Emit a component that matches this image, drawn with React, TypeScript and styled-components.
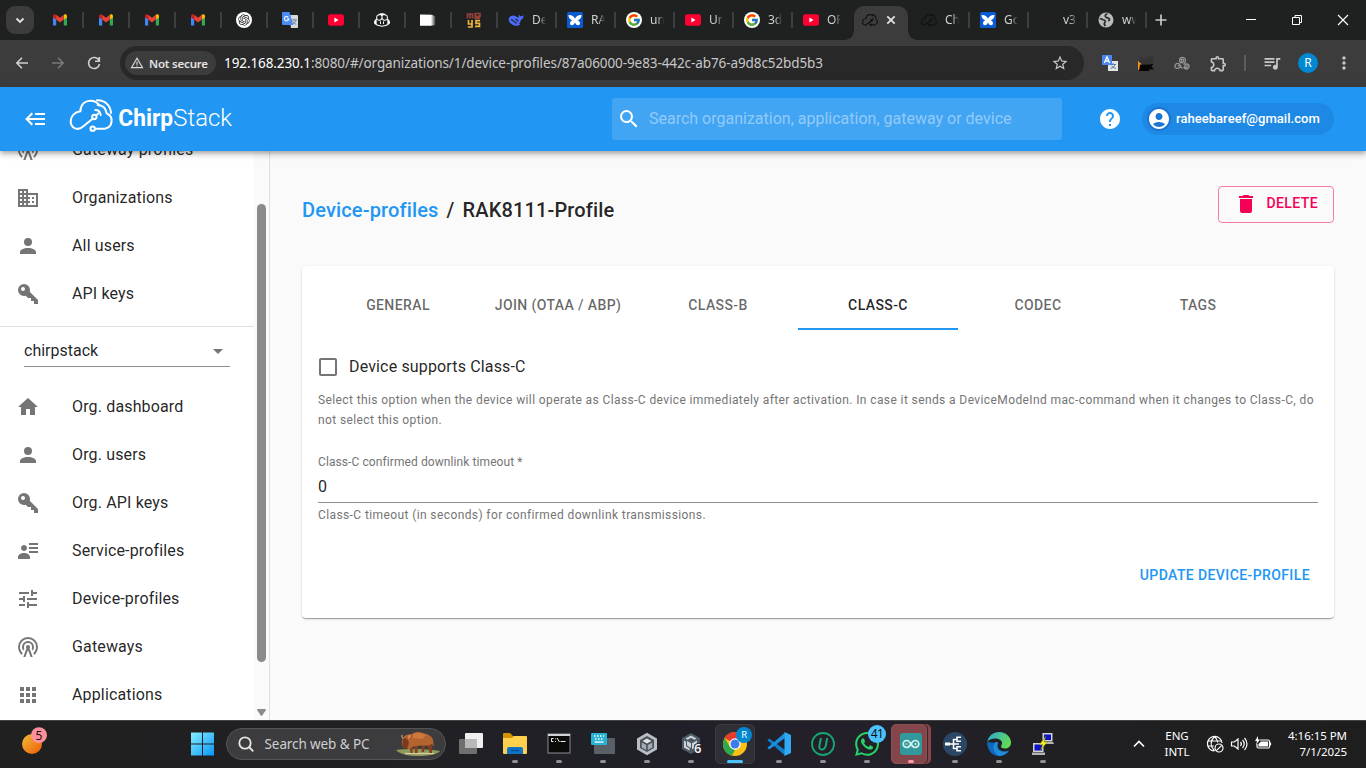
import React from "react";
import styled, { createGlobalStyle, css } from "styled-components";
import { FcGoogle } from "react-icons/fc";
import {
  MdHelp,
  MdAccountCircle,
  MdDelete,
  MdSearch,
  MdArrowDropDown,
  MdCheckBoxOutlineBlank,
  MdDomain,
  MdApps,
  MdStarBorder,
  MdMoreVert,
  MdOutlineExtension,
  MdQueueMusic,
} from "react-icons/md";
import { GoCopilot } from "react-icons/go";
import { SiOpenai, SiWhatsapp } from "react-icons/si";

const uiFont = `"Noto Sans", "Open Sans", sans-serif`;

const Global = createGlobalStyle`
  *, *::before, *::after { box-sizing: border-box; }
  html, body { margin: 0; padding: 0; overflow: hidden; }
  body { font-family: Roboto, sans-serif; color: rgba(0,0,0,.87); background: #fafafa; }
  svg { display: block; flex: none; }
`;

const Screen = styled.div`
  width: 1366px;
  height: 768px;
  display: flex;
  flex-direction: column;
  overflow: hidden;
`;

/* ---------- browser chrome ---------- */

const TabStrip = styled.div`
  height: 40px;
  flex: none;
  display: flex;
  align-items: stretch;
  background: #1f2120;
  font-family: ${uiFont};
`;

const TabSearch = styled.div`
  width: 28px;
  height: 28px;
  margin: 6px 3px 0 6px;
  border-radius: 9px;
  background: #3c3c3c;
  display: flex;
  align-items: center;
  justify-content: center;
`;

const Tab = styled.div<{ $wide?: boolean; $active?: boolean; $bar?: boolean }>`
  width: ${(p) => (p.$wide ? 59 : 46)}px;
  height: 40px;
  flex: none;
  padding-left: ${(p) => (p.$wide ? 11 : 15)}px;
  display: flex;
  align-items: center;
  position: relative;
  ${(p) =>
    p.$bar &&
    css`
      &::after {
        content: "";
        position: absolute;
        right: -1px;
        top: 12px;
        width: 2px;
        height: 16px;
        background: #3d3e3e;
      }
    `}
  ${(p) =>
    p.$active &&
    css`
      &::before {
        content: "";
        position: absolute;
        left: 3px;
        right: 2px;
        top: 6px;
        bottom: 0;
        border-radius: 10px 10px 0 0;
        background: #3c3c3c;
      }
      &::after {
        content: "";
        position: absolute;
        left: -6px;
        right: -7px;
        bottom: 0;
        height: 9px;
        background: radial-gradient(circle at 0 0, transparent 8.5px, #3c3c3c 9px) left / 9px 9px no-repeat,
          radial-gradient(circle at 100% 0, transparent 8.5px, #3c3c3c 9px) right / 9px 9px no-repeat;
      }
      > * {
        position: relative;
      }
    `}
`;

const Favicon = styled.span`
  width: 16px;
  height: 16px;
  flex: none;
  display: block;
`;

const TabTitle = styled.span`
  width: 14px;
  margin-left: 8px;
  overflow: hidden;
  white-space: nowrap;
  font-size: 12px;
  line-height: 18px;
  color: #d0d0d0;
  mask-image: linear-gradient(90deg, #000 50%, transparent);
`;

const CloseIcon = styled.svg`
  margin-left: 8px;
`;

const NewTab = styled.div`
  width: 30px;
  display: flex;
  align-items: center;
  justify-content: center;
`;

const WindowButtons = styled.div`
  margin-left: auto;
  display: flex;
  > div {
    width: 46px;
    display: flex;
    align-items: center;
    justify-content: center;
  }
`;

const AddressRow = styled.div`
  height: 47px;
  flex: none;
  display: flex;
  align-items: center;
  background: #3c3c3c;
  padding: 0 0 1px 4px;
  font-family: ${uiFont};
  color: #c7c7c7;
`;

const NavButton = styled.div`
  width: 36px;
  height: 34px;
  flex: none;
  display: flex;
  align-items: center;
  justify-content: center;
`;

const Omnibox = styled.div`
  width: 964px;
  height: 34px;
  margin: 0 8px;
  padding: 0 15px 0 5px;
  border-radius: 17px;
  background: #282828;
  display: flex;
  align-items: center;
`;

const SecurityChip = styled.div`
  width: 91px;
  height: 24px;
  border-radius: 12px;
  background: #3c3c3c;
  display: flex;
  align-items: center;
  gap: 5px;
  padding-left: 5px;
  font-size: 11.5px;
  font-weight: 600;
  letter-spacing: -0.2px;
  color: #e3e3e3;
  white-space: nowrap;
`;

const Url = styled.div`
  margin-left: 8px;
  flex: 1;
  font-size: 13.5px;
  letter-spacing: -0.09px;
  color: #c7c7c7;
  white-space: nowrap;
  b {
    font-weight: 400;
    color: #fff;
  }
`;

const BarDivider = styled.div`
  width: 2px;
  height: 16px;
  margin: 0 8px 0 8px;
  background: #5c5c5c;
`;

const Profile = styled.div`
  width: 20px;
  height: 20px;
  margin: 0 8px;
  border-radius: 50%;
  background: #0288d1;
  color: #fff;
  font-size: 12px;
  line-height: 20px;
  text-align: center;
`;

/* ---------- application ---------- */

const AppHeader = styled.header`
  height: 64px;
  flex: none;
  display: flex;
  align-items: center;
  padding: 0 32px 0 24px;
  background: #2196f3;
  color: #fff;
  position: relative;
  z-index: 2;
  box-shadow: 0 2px 4px -1px rgba(0, 0, 0, 0.2), 0 4px 5px rgba(0, 0, 0, 0.14),
    0 1px 10px rgba(0, 0, 0, 0.12);
`;

const LogoBox = styled.div`
  margin: 0 0 6px 16px;
`;

const SearchBox = styled.div`
  width: 450px;
  height: 42px;
  margin-left: auto;
  padding-left: 5px;
  display: flex;
  align-items: center;
  border-radius: 3px;
  background: rgba(255, 255, 255, 0.15);
  span {
    margin: 0 0 1px 8px;
    font-size: 16px;
    letter-spacing: 0;
    color: rgba(255, 255, 255, 0.43);
    white-space: nowrap;
  }
`;

const HelpButton = styled.div`
  margin: 0 20px 0 36px;
`;

const UserChip = styled.div`
  width: 192px;
  height: 32px;
  border-radius: 16px;
  background: #1e88e5;
  display: flex;
  align-items: center;
  padding-left: 5px;
  font-size: 13px;
  font-weight: 500;
  line-height: 20px;
  span {
    margin-bottom: 1px;
    letter-spacing: 0.04px;
  }
`;

const ChipAvatar = styled.div`
  width: 24px;
  height: 24px;
  margin-right: 5px;
  border-radius: 50%;
  background: #1976d2;
`;

const Body = styled.div`
  height: 569px;
  flex: none;
  display: flex;
  background: #fafafa;
`;

const Sidebar = styled.aside`
  width: 270px;
  flex: none;
  display: flex;
  border-right: 1px solid #e0e0e0;
  background: #fff;
  overflow: hidden;
`;

const SidebarScroll = styled.div`
  width: 254px;
  margin-top: -25px;
`;

const NavRow = styled.div`
  height: 48px;
  display: flex;
  align-items: center;
  padding-left: 16px;
  color: #757575;
  span {
    margin: 0 0 1px 32px;
    font-size: 16px;
    line-height: 24px;
    letter-spacing: 0.15px;
    color: rgba(0, 0, 0, 0.87);
  }
`;

const OrgBlock = styled.div`
  margin-top: 8px;
  height: 57px;
  padding: 8px 24px 0 24px;
  border-top: 1px solid #e0e0e0;
`;

const OrgSelect = styled.div`
  height: 32px;
  display: flex;
  align-items: center;
  justify-content: space-between;
  border-bottom: 1px solid #8f8f8f;
  font-size: 16px;
  letter-spacing: 0;
  svg {
    color: #757575;
  }
`;

const ScrollTrack = styled.div`
  width: 15px;
  padding: 53px 0 4px 3px;
  background: #fafafa;
  display: flex;
  flex-direction: column;
  justify-content: space-between;
`;

const ScrollThumb = styled.div`
  width: 9px;
  height: 458px;
  border-radius: 5px;
  background: #8b8b8b;
`;

const Main = styled.main`
  flex: 1;
  padding: 35px 32px 0 32px;
`;

const TitleRow = styled.div`
  height: 80px;
  display: flex;
  justify-content: space-between;
  align-items: flex-start;
`;

const Breadcrumb = styled.h1`
  margin: 8px 0 0;
  font-size: 20px;
  line-height: 32px;
  font-weight: 500;
  letter-spacing: 0.15px;
  display: flex;
  gap: 8px;
  a {
    color: #2196f3;
  }
`;

const DeleteButton = styled.button`
  width: 116px;
  height: 37px;
  padding: 0 15px 1px 15px;
  display: flex;
  align-items: center;
  justify-content: space-between;
  border: 1px solid rgba(245, 0, 87, 0.5);
  border-radius: 4px;
  background: transparent;
  color: #f50057;
  font: 500 14px/24px Roboto, sans-serif;
  letter-spacing: 0.4px;
  span {
    margin-bottom: 2px;
  }
`;

const Card = styled.section`
  height: 352px;
  padding: 16px;
  border-radius: 4px;
  background: #fff;
  box-shadow: 0 2px 1px -1px rgba(0, 0, 0, 0.2), 0 1px 1px rgba(0, 0, 0, 0.14),
    0 1px 3px rgba(0, 0, 0, 0.12);
`;

const Tabs = styled.div`
  display: flex;
`;

const CardTab = styled.div<{ $selected?: boolean }>`
  width: 160px;
  height: 48px;
  padding-top: 11px;
  text-align: center;
  font-size: 14px;
  line-height: 24px;
  font-weight: 500;
  letter-spacing: 0.4px;
  color: ${(p) => (p.$selected ? "rgba(0,0,0,.87)" : "rgba(0,0,0,.6)")};
  border-bottom: 2px solid ${(p) => (p.$selected ? "#2196f3" : "transparent")};
`;

const CheckRow = styled.div`
  margin-top: 24px;
  height: 26px;
  display: flex;
  align-items: center;
  margin-left: -2px;
  color: #757575;
  span {
    margin: 0 0 2px 9px;
    font-size: 16px;
    letter-spacing: 0.15px;
    color: rgba(0, 0, 0, 0.87);
  }
`;

const Help = styled.p<{ $top?: number }>`
  margin: ${(p) => p.$top ?? 0}px -4px 0 0;
  font-size: 12px;
  line-height: 20px;
  letter-spacing: 0.395px;
  color: #757575;
`;

const Field = styled.div`
  margin-top: 24px;
  border-bottom: 1px solid #8f8f8f;
  height: 49px;
  label {
    display: block;
    font-size: 12px;
    line-height: 16px;
    letter-spacing: 0.09px;
    color: #757575;
  }
  div {
    margin-top: 7px;
    font-size: 16px;
    line-height: 19px;
  }
`;

const Actions = styled.div`
  margin-top: 38px;
  padding-right: 8px;
  display: flex;
  justify-content: flex-end;
  font-size: 14px;
  line-height: 24px;
  font-weight: 500;
  letter-spacing: 0.4px;
  color: #2196f3;
`;

/* ---------- taskbar ---------- */

const Taskbar = styled.footer`
  height: 48px;
  flex: none;
  display: flex;
  align-items: center;
  background: linear-gradient(90deg, #202020, #202027 45%, #23202a 60%, #202022 80%, #1e1e1f);
  box-shadow: inset 0 1px 0 #444;
  color: #fff;
  font-family: ${uiFont};
`;

const Widgets = styled.div`
  width: 190px;
  padding-left: 22px;
`;

const SearchPill = styled.div`
  width: 220px;
  height: 32px;
  margin: 0 2px 0 12px;
  padding: 0 5px 0 11px;
  border-radius: 16px;
  border: 1px solid #555557;
  background: #3c3c3e;
  display: flex;
  align-items: center;
  justify-content: space-between;
  font-size: 13.5px;
  letter-spacing: -0.1px;
  color: #cfcfcf;
  span {
    margin-right: 16px;
    white-space: nowrap;
  }
`;

const TaskItems = styled.div`
  display: flex;
  margin-left: 1px;
`;

const TaskItem = styled.div<{ $mark?: string; $markWidth?: number }>`
  width: 44px;
  height: 48px;
  flex: none;
  position: relative;
  display: flex;
  align-items: center;
  justify-content: center;
  &::after {
    content: "";
    position: absolute;
    bottom: 5px;
    left: 50%;
    width: ${(p) => p.$markWidth ?? 6}px;
    height: 3px;
    margin-left: ${(p) => -(p.$markWidth ?? 6) / 2}px;
    border-radius: 2px;
    background: ${(p) => p.$mark ?? "#909090"};
  }
`;

const TaskTile = styled.div<{ $tone: "plain" | "alert" }>`
  width: 40px;
  height: 40px;
  display: flex;
  align-items: center;
  justify-content: center;
  border-radius: 5px;
  border: 1px solid #3a3a42;
  background: #2f2f36;
  ${(p) =>
    p.$tone === "alert" &&
    css`
      width: 36px;
      margin-right: 4px;
      padding-left: 4px;
      border-color: #8f5055;
      background: #85464b;
      box-shadow: 1px 0 0 #3a2529, 4px 0 0 #85464b;
    `}
`;

const Badge = styled.span<{ $size: number; $bg: string; $fg: string }>`
  position: absolute;
  top: ${(p) => (p.$size > 16 ? 5 : 7)}px;
  right: ${(p) => (p.$size > 16 ? 3 : 5)}px;
  width: ${(p) => p.$size}px;
  height: ${(p) => p.$size}px;
  border-radius: 50%;
  background: ${(p) => p.$bg};
  color: ${(p) => p.$fg};
  font-size: ${(p) => (p.$size > 16 ? 12 : 9.5)}px;
  line-height: ${(p) => p.$size}px;
  letter-spacing: -0.5px;
  text-align: center;
`;

const Tray = styled.div`
  margin-left: auto;
  padding-right: 19px;
  display: flex;
  align-items: center;
  font-size: 11.5px;
  line-height: 16px;
`;

const TrayText = styled.div<{ $w: number; $align?: string }>`
  width: ${(p) => p.$w}px;
  margin-bottom: 1px;
  text-align: ${(p) => p.$align ?? "center"};
  white-space: nowrap;
  letter-spacing: -0.05px;
`;

const TrayIcons = styled.div`
  display: flex;
  align-items: center;
  gap: 6px;
  margin: 0 11px 0 12px;
`;

const TrayChevron = styled.div`
  margin-right: 13px;
`;

/* ---------- drawings ---------- */

const Gmail = () => (
  <svg width="16" height="16" viewBox="-1 0 16 16">
    <path d="M0 4v9.5h3.2V7z" fill="#4285f4" />
    <path d="M14 4v9.5h-3.2V7z" fill="#34a853" />
    <path d="M0 4.2C0 2.300 2 1.800 3.200 2.800v4.800L0 5.400z" fill="#c5221f" />
    <path d="M14 4.2c0-1.900-2-2.400-3.200-1.400v4.800L14 5.400z" fill="#fbbc04" />
    <path d="M3.200 2.800L7 5.800l3.800-3v4.800L7 10.500 3.200 7.600z" fill="#ea4335" />
  </svg>
);

const YouTube = () => (
  <svg width="16" height="16" viewBox="0 0 16 16">
    <rect y="2.3" width="16" height="11.4" rx="2.6" fill="#ff0033" />
    <path d="M6.4 5.6v4.8L10.5 8z" fill="#fff" />
  </svg>
);

const ChatGpt = () => (
  <svg width="16" height="16" viewBox="0 0 16 16">
    <circle cx="8" cy="8" r="8" fill="#fff" />
    <g transform="translate(2.2 2.2)" color="#222">
      <SiOpenai size={11.6} />
    </g>
  </svg>
);

const TranslateIcon = () => (
  <svg width="16" height="16" viewBox="0 0 16 16">
    <path d="M7 3h8a1 1 0 0 1 1 1v11a1 1 0 0 1-1 1H9z" fill="#d6d9dd" />
    <path d="M9.5 8h5.5M12.2 6.8V8M14 8c-.5 2-2 3.500-3.500 4.300M10.800 9.300c.8 1.500 2 2.400 3.500 3" stroke="#6c8791" fill="none" />
    <path d="M1 0h6.500l3.800 13H1a1 1 0 0 1-1-1V1a1 1 0 0 1 1-1z" fill="#4c8bf5" />
    <path d="M6.300 5.300A2.200 2.200 0 1 0 6.800 7H4.800" stroke="#fff" fill="none" strokeWidth="1.100" />
  </svg>
);

const BlurSquare = () => (
  <svg width="16" height="16" viewBox="0 0 16 16">
    <defs>
      <linearGradient id="fadeSq">
        <stop offset=".7" stopColor="#fff" />
        <stop offset="1" stopColor="#fff" stopOpacity=".1" />
      </linearGradient>
    </defs>
    <path d="M0 2.500l12 .3 3.500 1.700v8.500l-4.500.8H0z" fill="url(#fadeSq)" />
  </svg>
);

const Meoys = () => (
  <svg width="16" height="16" viewBox="0 0 16 16" fill="none" strokeWidth="1.700">
    <path d="M1.500 6.500V2h5v4.500M4 2v4.500M9 4.300h5V1.500H9.200v4.700H14" stroke="#93403a" />
    <path d="M2.500 8v4h3.500V8M6 12v3H1.800M14 8.700h-4v2.600h3.500v3H9" stroke="#f0b43c" />
  </svg>
);

const Whale = () => (
  <svg width="16" height="16" viewBox="0 0 16 16">
    <path
      d="M.8 6.500C2 3.500 5 2.800 7.200 4c1.500.8 2.500 1.700 3.200 1.500.8-.3.200-1.800.5-3.200.6.900 1 1.700 1.900 1.900 1 .3 1.800-.5 2.800-1-.1 2.400-.9 4-2.700 4.600-.3 2-1 3.200-2 4.200 0 0 1 .6 1.500.800-3 1.700-6.800 1.300-9-.700C1.200 10.200.3 8.300.8 6.500z"
      fill="#4d6bfe"
    />
    <path d="M3 7.500c2 .3 3.500 2.500 5.500 4M7.200 7.300c1.400-.2 2.500 1 2.500 2.500" stroke="#1f2120" strokeWidth="1.100" fill="none" />
  </svg>
);

const Rak = () => (
  <svg width="16" height="16" viewBox="0 0 16 16">
    <rect width="16" height="16" rx="1.500" fill="#0a5bd3" />
    <path d="M1.500 3c2.800-.4 5.600 1.200 6.500 3.700C8.900 4.200 11.700 2.600 14.500 3c0 2.800-1.600 5-4.300 5.300 1.600.2 2.800 1.500 2.800 3 0 1.200-.8 2-1.900 2C9.300 13.300 8.400 11.800 8 10.300c-.4 1.500-1.300 3-3.100 3-1.100 0-1.900-.8-1.900-2 0-1.500 1.200-2.800 2.800-3C3.100 8 1.500 5.800 1.500 3z" fill="#fff" />
  </svg>
);

const GlobeFav = () => (
  <svg width="16" height="16" viewBox="0 0 16 16">
    <circle cx="8" cy="8" r="7.500" fill="#b9bbbd" />
    <path
      d="M9.500 1.800C7 2.500 6.500 4 8 5.200c1.200.9 3 .3 3.500 1.800.3 1-.5 1.600-1.500 1.600M1.800 6.500c1.700.2 2.700 1.500 4.200 1.500 1.300.2 1.800 1.500.8 2.500-.9 1-.3 2.500.7 3.500"
      stroke="#2a2c2b"
      strokeWidth="1.700"
      fill="none"
    />
  </svg>
);

const cloudPath =
  "M86 74 L58 97 C42 112 20 103 20 82 C20 66 32 54 49 52 C50 30 64 20 80 20 C92 20 100 25 106 33";

const CloudFav = ({ color = "#111" }: { color?: string }) => (
  <svg width="16" height="16" viewBox="15 0 132 128" fill="none" stroke={color} strokeWidth="9">
    <path d={cloudPath} />
    <path d="M92 104H120C148 100 148 66 128 58M96 20C118 20 128 34 132 52M92 70L112 48" />
    <circle cx="92" cy="69" r="6" />
    <circle cx="86" cy="104" r="6" />
  </svg>
);

const Logo = () => (
  <svg width="176" height="44" viewBox="0 0 528 132">
    <g fill="none" stroke="#fff" strokeWidth="6" strokeLinecap="round">
      <path d={cloudPath} />
      <path d="M94 104H122C148 100 148 68 131 60" />
      <path d="M99 19C122 18 140 34 141 57" />
      <path d="M101 33C116 34 126 44 128 58" />
      <path d="M94 48C103 48 109 54 110 63" />
      <path d="M97 64L103 58" />
      <circle cx="91" cy="69" r="6.500" />
      <circle cx="86" cy="104" r="6.500" />
    </g>
    <text x="163" y="96" fill="#fff" fontFamily="Roboto, sans-serif" fontSize="73" fontWeight="700" textLength="164" lengthAdjust="spacingAndGlyphs">
      Chirp
    </text>
    <text x="328" y="96" fill="#fff" fontFamily="Roboto, sans-serif" fontSize="73" fontWeight="300" textLength="176" lengthAdjust="spacingAndGlyphs">
      Stack
    </text>
  </svg>
);

const paths = {
  burger: "M5,13L9,17L7.6,18.42L1.18,12L7.6,5.58L9,7L5,11H21V13H5M21,6V8H11V6H21M21,16V18H11V16H21Z",
  tower:
    "M12,10A2,2 0 0,1 14,12C14,12.5 13.82,12.94 13.53,13.29L16.7,22H14.57L12,14.93L9.43,22H7.3L10.47,13.29C10.18,12.94 10,12.5 10,12A2,2 0 0,1 12,10M12,8A4,4 0 0,0 8,12C8,12.5 8.1,13 8.28,13.46L7.4,15.86C6.53,14.81 6,13.47 6,12A6,6 0 0,1 12,6A6,6 0 0,1 18,12C18,13.47 17.47,14.81 16.6,15.86L15.72,13.46C15.9,13 16,12.5 16,12A4,4 0 0,0 12,8M12,4A8,8 0 0,0 4,12C4,14.36 5,16.5 6.64,17.94L5.92,19.94C3.54,18.11 2,15.23 2,12A10,10 0 0,1 12,2A10,10 0 0,1 22,12C22,15.23 20.46,18.11 18.08,19.94L17.36,17.94C19,16.5 20,14.36 20,12A8,8 0 0,0 12,4Z",
  account: "M12,4A4,4 0 0,1 16,8A4,4 0 0,1 12,12A4,4 0 0,1 8,8A4,4 0 0,1 12,4M12,14C16.42,14 20,15.79 20,18V20H4V18C4,15.79 7.58,14 12,14Z",
  key: "M22,18V22H18V19H15V16H12L9.74,13.74C9.19,13.91 8.61,14 8,14A6,6 0 0,1 2,8A6,6 0 0,1 8,2A6,6 0 0,1 14,8C14,8.61 13.91,9.19 13.74,9.74L22,18M7,5A2,2 0 0,0 5,7A2,2 0 0,0 7,9A2,2 0 0,0 9,7A2,2 0 0,0 7,5Z",
  home: "M10,20V14H14V20H19V12H22L12,3L2,12H5V20H10Z",
  details:
    "M11 9C11 10.66 9.66 12 8 12C6.34 12 5 10.66 5 9C5 7.34 6.34 6 8 6C9.66 6 11 7.34 11 9M14 20H2V18C2 15.79 4.69 14 8 14C11.31 14 14 15.79 14 18M22 12V14H13V12M22 8V10H13V8M22 4V6H13V4Z",
  tune: "M3,17V19H9V17H3M3,5V7H13V5H3M13,21V19H21V17H13V15H11V21H13M7,9V11H3V13H7V15H9V9H7M21,13V11H11V13H21M15,9H17V7H21V5H17V3H15V9Z",
};

const Glyph = ({ d }: { d: string }) => (
  <svg width="24" height="24" viewBox="0 0 24 24" fill="currentColor">
    <path d={d} />
  </svg>
);

const Line = ({ d, size = 16, w = 1.6, color = "currentColor" }: { d: string; size?: number; w?: number; color?: string }) => (
  <svg width={size} height={size} viewBox="0 0 16 16" fill="none" stroke={color} strokeWidth={w}>
    <path d={d} />
  </svg>
);

const ExtTranslate = () => (
  <svg width="16" height="16" viewBox="0 0 16 16">
    <rect x="6" y="6" width="10" height="10" fill="#dfe5ea" />
    <path d="M8 9.500h6M11 8v1.500M13 9.500c-.6 2-2.500 3.500-4.500 4M9.500 11c1.500 1 2.500 2 4.500 2.500" stroke="#5c7f9b" fill="none" />
    <rect width="10" height="10" fill="#4a86ee" />
    <path d="M2.300 8L5 1.800 7.700 8M3.300 6h3.400" stroke="#fff" strokeWidth="1.300" fill="none" />
  </svg>
);

const ExtDark = () => (
  <svg width="16" height="16" viewBox="0 0 16 16">
    <path d="M2 2l5 2 7-3 2 4-3 4H1z" fill="#343434" />
    <path d="M0 6l4 3.500L2 15H0z" fill="#f7931e" />
    <path d="M2 9.500h10l3.500-1-2 3 2.500 3h-3l-1.500-1v2.500H1z" fill="#050505" />
  </svg>
);

const ExtTriskel = () => (
  <svg width="16" height="16" viewBox="0 0 16 16" fill="none" stroke="#949494" strokeWidth="1.300">
    <path d="M8.500 6.500a1.200 1.200 0 1 1 1-1.800c.8 1.800-.8 3.600-3 2.900a3 3 0 1 1 5-2.500c.2 2-.5 3.300-2 4.400" />
    <path d="M4 11.300a1.200 1.200 0 1 1 .9 1.400M4.900 12.700C2.500 14.500.5 12.500 1 10.500c.5-2 3-2.700 4.500-1.300 1.500 1.500 1 3.600 3 4.300" />
    <path d="M12.300 10.500a1.200 1.200 0 1 1-1.500 1M10.800 11.500c-.3-2.500 2-3.300 3.500-2 1.500 1.500.8 4.200-1.300 4.500-1.800.2-3-.8-3.500-2.200" />
  </svg>
);

const Bison = () => (
  <svg width="44" height="24" viewBox="0 0 44 24">
    <path d="M0 18c10-1.500 30-1.500 44 1-2 3.500-12 5-22 5S4 22 0 18z" fill="#8d9a5b" />
    <path d="M9 21.500h29" stroke="#d9cf9c" strokeWidth="1.300" />
    <path d="M31 9l5 4v8h-2.500l-.8-5-4.700-4zM18 12h4l-.5 9h-2.500zM25.500 11h4l-1.500 9h-2.300zM13.500 12h3.500l-.4 9h-2.200z" fill="#84401e" />
    <path d="M7 6C9 2 13 3 17 1.500c4-2.200 7-1.500 10-.5 5 1 9 3 10 7l.8 7-1.800-3c-3 2-8 1.300-11 1.500l-8 1-4 3-3-2.500-2.500.5C5.500 12.500 5 9 7 6z" fill="#b5642f" />
    <path d="M7 6c4 0 6 2 5.800 5 0 3-2 5.500-4 5.500S6 12 7 6z" fill="#7a3b1d" />
    <path d="M17 2c4-2 9-1 13 1l-4 4-9-1z" fill="#cc7a3c" />
    <path d="M7.500 6.500c-2-.8-2-2.600-1.200-3.700M12 6c2-1 2-2 1-3" stroke="#e8cda0" fill="none" />
  </svg>
);

const WindowsLogo = () => (
  <svg width="24" height="24" viewBox="0 0 24 24">
    <defs>
      <linearGradient id="win" x1="0" y1="0" x2="1" y2="1">
        <stop stopColor="#84f0ff" />
        <stop offset="1" stopColor="#0a94f8" />
      </linearGradient>
    </defs>
    <path d="M1 .500h11v11H1zM13 .500h11v11H13zM1 12.500h11v11H1zM13 12.500h11v11H13z" fill="url(#win)" />
  </svg>
);

const WeatherIcon = () => (
  <svg width="26" height="34" viewBox="0 0 26 34">
    <defs>
      <linearGradient id="sun" x1="0" y1="0" x2="1" y2="1">
        <stop stopColor="#efbf35" />
        <stop offset="1" stopColor="#ef5a0a" />
      </linearGradient>
    </defs>
    <circle cx="10" cy="17" r="10" fill="url(#sun)" />
    <circle cx="17" cy="8.200" r="8" fill="#ff8f9b" />
    <text x="17" y="12.500" textAnchor="middle" fontFamily="Noto Sans" fontSize="12" fill="#111">
      5
    </text>
  </svg>
);

const TaskView = () => (
  <svg width="24" height="24" viewBox="0 0 24 24">
    <rect x="6" y="1" width="18" height="15" rx="1" fill="#efefef" />
    <rect x="0" y="7" width="18" height="15" rx="1" fill="#6f6f70" />
    <rect x="6" y="7" width="12" height="9" fill="#b8b8b8" />
  </svg>
);

const Folder = () => (
  <svg width="24" height="24" viewBox="0 0 24 24">
    <path d="M0 2a1 1 0 0 1 1-1h6l3 3h12v5H0z" fill="#d39300" />
    <path d="M0 6h9l2-2h12a1 1 0 0 1 1 1v16a1 1 0 0 1-1 1H1a1 1 0 0 1-1-1z" fill="#ffd04c" />
    <path d="M4 22v-5a2 2 0 0 1 2-2h12a2 2 0 0 1 2 2v5z" fill="#1073c6" />
    <path d="M8 18.500h8" stroke="#075395" strokeWidth="1.500" />
  </svg>
);

const Cmd = () => (
  <svg width="24" height="24" viewBox="0 0 24 24">
    <rect x="1" y="2" width="22" height="19" fill="#0a0a0a" stroke="#8e8e8e" />
    <path d="M1 3h22" stroke="#cdd2d6" strokeWidth="2" />
    <path d="M6.500 6.500h-2v3h2M8.500 6.500v.8M8.500 9v.8M10 6l2.500 4M13.500 9.500h5" stroke="#eee" fill="none" />
  </svg>
);

const Keyboard = () => (
  <svg width="24" height="24" viewBox="0 0 24 24">
    <rect x="3" y="6" width="21" height="16" rx="1" fill="#596068" />
    <rect x="0" y="1" width="16" height="12" rx="1" fill="#27b3d2" />
    <path d="M3 4h10M4 7h9" stroke="#fff" strokeWidth="1.500" strokeDasharray="1.500 1.500" />
    <path d="M3.500 10h9" stroke="#fff" strokeWidth="1.300" />
  </svg>
);

const Unity = () => (
  <svg width="24" height="24" viewBox="0 0 24 24">
    <path d="M12 .8l10 5.600v11.200l-10 5.600-10-5.600V6.400z" fill="#b9bec5" />
    <path d="M12 4l7 4v8l-7 4-7-4V8z" fill="#4b525b" />
    <path d="M12 6.500l4.500 2.500-4.500 2.600L7.500 9z" fill="#dfe2e6" />
    <path d="M6.700 10.500l4.500 2.600v5l-4.500-2.600zM17.300 10.500l-4.500 2.600v5l4.500-2.600z" fill="#a4aab2" />
  </svg>
);

const UnitySix = () => (
  <svg width="24" height="24" viewBox="0 0 24 24">
    <path d="M12 1l9 5v11l-9 5-9-5V6z" fill="#4d5964" />
    <path d="M12 3.500l5.500 3-2 1.200L12 5.800 8.500 7.700l-2-1.200zM5 8.500l2 1.200v4.500l3.500 2v2.300L5 15.500zM18 8.500l-5 2.800v6l2-1.100v-3.500l3-1.700zM8 9l4 2.300V16L8 13.500z" fill="#cdd4da" />
    <text x="15" y="21" fontFamily="Noto Sans" fontWeight="600" fontSize="13" fill="#f1f1f1" stroke="#202027" strokeWidth="1.500" paintOrder="stroke">
      6
    </text>
  </svg>
);

const Chrome = () => (
  <svg width="24" height="24" viewBox="0 0 24 24">
    <circle cx="12" cy="12" r="12" fill="#fbc116" />
    <path d="M12 12L1.600 6a12 12 0 0 1 20.800 0z" fill="#e33b2e" />
    <path d="M1.600 6L7 15l5 3-3 5.600A12 12 0 0 1 1.600 6z" fill="#2da94f" />
    <circle cx="12" cy="12" r="5.700" fill="#fff" />
    <circle cx="12" cy="12" r="4.500" fill="#3b7ded" />
  </svg>
);

const VsCode = () => (
  <svg width="24" height="24" viewBox="0 0 24 24">
    <path d="M.4 8.200L2.300 6.500 18 18v5.500z" fill="#0f7fcc" />
    <path d="M.4 15.800l1.900 1.700L18 6V.5z" fill="#1a8fdd" />
    <path d="M17.500 0L24 3v18l-6.500 3z" fill="#32a9f3" />
  </svg>
);

const Uninstaller = () => (
  <svg width="24" height="24" viewBox="0 0 24 24" fill="none">
    <circle cx="12" cy="12" r="11" stroke="#17a673" strokeWidth="1.800" />
    <path d="M10 6L8.500 13c-.6 3 0 4.500 2.300 4.500 2.500 0 3.400-1.500 4-4L16.200 6" stroke="#17a673" strokeWidth="2" />
  </svg>
);

const Arduino = () => (
  <svg width="22" height="22" viewBox="0 0 22 22" fill="none">
    <rect width="22" height="22" rx="3" fill="#31999c" />
    <path d="M11 11C9.500 8.500 8.500 7.500 6.700 7.500a3.500 3.500 0 0 0 0 7c1.800 0 2.800-1 4.300-3.500s2.500-3.500 4.300-3.500a3.500 3.500 0 0 1 0 7c-1.800 0-2.800-1-4.300-3.500z" stroke="#d5f2f0" strokeWidth="1.700" />
    <path d="M5.500 11h2M14.500 11h2M15.500 10v2" stroke="#d5f2f0" />
  </svg>
);

const NodesApp = () => (
  <svg width="24" height="24" viewBox="0 0 24 24">
    <circle cx="12" cy="12" r="12" fill="#2b4766" />
    <path d="M6 12h10M10.500 7v10M10 7.500h3.500M10 16.500h3.500M14 4.500v5.500M14 14v5.500M14 5.200h4M14 9.300h4M14 14.700h4M14 18.800h4" stroke="#fff" strokeWidth="1.500" fill="none" />
    <path d="M2 10.500h5v3H2z" fill="#fff" />
  </svg>
);

const Edge = () => (
  <svg width="24" height="24" viewBox="0 0 24 24">
    <defs>
      <linearGradient id="edgeTop" x1="0" y1="0" x2="1" y2=".4">
        <stop stopColor="#2aa5dc" />
        <stop offset="1" stopColor="#62d857" />
      </linearGradient>
    </defs>
    <path d="M.2 10C0 18 5 24 12 24c4.500 0 8-2.500 10-5.500-3 1.500-6.500 1.500-9-.3-2.300-1.600-2.700-4.500-1.500-7z" fill="#1068bd" />
    <path d="M.2 10C1.500 3.500 6.500 0 12 0c7.500 0 12 5.500 12 10.500 0 4-3 6-6 6-2.500 0-4-1-4-2.300 0-.8 1-1.200 1-3C15 8 11.500 6.500 8.500 6.500 4.500 6.500 1.500 8 .2 10z" fill="url(#edgeTop)" />
    <path d="M8.500 10c-4 4-2 11 3.500 14 4.500 0 8-2.500 10-5.500-2.500 1.500-6 2-9 .3-3.500-2-4-5.500-2-8.800z" fill="#1f8cdb" />
  </svg>
);

const Putty = () => (
  <svg width="24" height="24" viewBox="0 0 24 24">
    <rect x="11.500" y="1" width="10" height="8.500" fill="#d2d2d2" />
    <rect x="13" y="2.500" width="7" height="5.500" fill="#0b12c8" />
    <path d="M10 10h12l1 2H11z" fill="#b5b5b5" />
    <rect x="2" y="11" width="10.500" height="9" fill="#d2d2d2" />
    <rect x="3.500" y="12.500" width="7.500" height="6" fill="#0b12c8" />
    <path d="M1 20.500h13V23H1z" fill="#b5b5b5" />
    <path d="M15 4L8 13l4-.5-3 6 8-9-4 .5z" fill="#f5ee26" stroke="#605d00" strokeWidth=".4" />
  </svg>
);

/* ---------- data ---------- */

function GoogleFav() {
  return (
    <svg width="16" height="16" viewBox="0 0 16 16">
      <circle cx="8" cy="8" r="8" fill="#fff" />
      <g transform="translate(1 1)">
        <FcGoogle size={14} />
      </g>
    </svg>
  );
}

const smallTabs = [
  <Gmail />,
  <Gmail />,
  <Gmail />,
  <Gmail />,
  <ChatGpt />,
  <TranslateIcon />,
  <YouTube />,
  <GoCopilot size={16} color="#fff" />,
  <BlurSquare />,
  <Meoys />,
];

const wideTabs: [React.ReactNode, string][] = [
  [<Whale />, "Dee"],
  [<Rak />, "RAK"],
  [<GoogleFav />, "unk"],
  [<YouTube />, "Un"],
  [<GoogleFav />, "3d p"],
  [<YouTube />, "OF"],
];

const lateTabs: [React.ReactNode, string][] = [
  [<CloudFav />, "Chi"],
  [<Rak />, "Go"],
  [<CloudFav color="#242323" />, "v3"],
  [<GlobeFav />, "ww"],
];

const topNav: [React.ReactNode, string][] = [
  [<Glyph d={paths.tower} />, "Gateway profiles"],
  [<MdDomain size={24} />, "Organizations"],
  [<Glyph d={paths.account} />, "All users"],
  [<Glyph d={paths.key} />, "API keys"],
];

const orgNav: [React.ReactNode, string][] = [
  [<Glyph d={paths.home} />, "Org. dashboard"],
  [<Glyph d={paths.account} />, "Org. users"],
  [<Glyph d={paths.key} />, "Org. API keys"],
  [<Glyph d={paths.details} />, "Service-profiles"],
  [<Glyph d={paths.tune} />, "Device-profiles"],
  [<Glyph d={paths.tower} />, "Gateways"],
  [<MdApps size={24} />, "Applications"],
];

const cardTabs = ["GENERAL", "JOIN (OTAA / ABP)", "CLASS-B", "CLASS-C", "CODEC", "TAGS"];

export default function App() {
  return (
    <Screen>
      <Global />
      <TabStrip>
        <TabSearch>
          <Line d="M4.500 6.500L8 10l3.500-3.500" color="#e3e3e3" w={1.8} />
        </TabSearch>
        {smallTabs.map((icon, i) => (
          <Tab key={i} $bar>
            <Favicon>{icon}</Favicon>
          </Tab>
        ))}
        {wideTabs.map(([icon, title], i) => (
          <Tab key={i} $wide $bar={i < wideTabs.length - 1}>
            <Favicon>{icon}</Favicon>
            <TabTitle>{title}</TabTitle>
          </Tab>
        ))}
        <Tab $wide $active>
          <Favicon>
            <CloudFav />
          </Favicon>
          <CloseIcon width="10" height="10" viewBox="0 0 10 10" stroke="#e3e3e3" strokeWidth="1.8">
            <path d="M1.300 1.300l7.400 7.400M8.700 1.300L1.300 8.700" />
          </CloseIcon>
        </Tab>
        {lateTabs.map(([icon, title], i) => (
          <Tab key={i} $wide $bar>
            <Favicon>{icon}</Favicon>
            <TabTitle>{title}</TabTitle>
          </Tab>
        ))}
        <NewTab>
          <Line d="M8 2.500v11M2.500 8h11" color="#c7c7c7" w={1.7} />
        </NewTab>
        <WindowButtons>
          <div>
            <Line d="M3 7.500h10" color="#fff" w={1} />
          </div>
          <div>
            <Line d="M3.500 5.500h7v7h-7zM6 5.500V3.500h6.500V10.500h-2" color="#fff" w={1} />
          </div>
          <div>
            <Line d="M3 3l10 10M13 3L3 13" color="#fff" w={1.1} />
          </div>
        </WindowButtons>
      </TabStrip>

      <AddressRow>
        <NavButton>
          <Line d="M14 8H3M8 2.800L2.800 8 8 13.200" color="#d0d0d0" />
        </NavButton>
        <NavButton>
          <Line d="M2 8h11M8 2.800L13.200 8 8 13.200" color="#7a7a7a" />
        </NavButton>
        <NavButton>
          <Line d="M13 5.500A5.500 5.500 0 1 0 13.500 9M13.300 2v4.300H9" color="#d0d0d0" />
        </NavButton>
        <Omnibox>
          <SecurityChip>
            <Line d="M8 2.500L1.800 13.200h12.400zM8 6.500v3.500M8 10.800v1.300" size={14} w={1.4} color="#d8d8d8" />
            Not secure
          </SecurityChip>
          <Url>
            <b>192.168.230.1</b>:8080/#/organizations/1/device-profiles/87a06000-9e83-442c-ab76-a9d8c52bd5b3
          </Url>
          <MdStarBorder size={18} />
        </Omnibox>
        <NavButton>
          <ExtTranslate />
        </NavButton>
        <NavButton>
          <ExtDark />
        </NavButton>
        <NavButton>
          <ExtTriskel />
        </NavButton>
        <NavButton>
          <MdOutlineExtension size={19} />
        </NavButton>
        <BarDivider />
        <NavButton>
          <MdQueueMusic size={20} />
        </NavButton>
        <Profile>R</Profile>
        <NavButton>
          <MdMoreVert size={20} />
        </NavButton>
      </AddressRow>

      <AppHeader>
        <Glyph d={paths.burger} />
        <LogoBox>
          <Logo />
        </LogoBox>
        <SearchBox>
          <MdSearch size={24} />
          <span>Search organization, application, gateway or device</span>
        </SearchBox>
        <HelpButton>
          <MdHelp size={24} />
        </HelpButton>
        <UserChip>
          <ChipAvatar>
            <MdAccountCircle size={24} />
          </ChipAvatar>
          <span>raheebareef@gmail.com</span>
        </UserChip>
      </AppHeader>

      <Body>
        <Sidebar>
          <SidebarScroll>
            {topNav.map(([icon, label]) => (
              <NavRow key={label}>
                {icon}
                <span>{label}</span>
              </NavRow>
            ))}
            <OrgBlock>
              <OrgSelect>
                chirpstack
                <MdArrowDropDown size={24} />
              </OrgSelect>
            </OrgBlock>
            {orgNav.map(([icon, label]) => (
              <NavRow key={label}>
                {icon}
                <span>{label}</span>
              </NavRow>
            ))}
          </SidebarScroll>
          <ScrollTrack>
            <ScrollThumb />
            <svg width="9" height="7" viewBox="0 0 9 7">
              <path d="M.8 0h7.400a.8.800 0 0 1 .6 1.200L5.200 6.500a.8.800 0 0 1-1.400 0L.2 1.200A.8.800 0 0 1 .8 0z" fill="#8b8b8b" />
            </svg>
          </ScrollTrack>
        </Sidebar>

        <Main>
          <TitleRow>
            <Breadcrumb>
              <a>Device-profiles</a>
              <span>/</span>
              <span>RAK8111-Profile</span>
            </Breadcrumb>
            <DeleteButton>
              <MdDelete size={24} />
              <span>DELETE</span>
            </DeleteButton>
          </TitleRow>
          <Card>
            <Tabs>
              {cardTabs.map((label) => (
                <CardTab key={label} $selected={label === "CLASS-C"}>
                  {label}
                </CardTab>
              ))}
            </Tabs>
            <CheckRow>
              <MdCheckBoxOutlineBlank size={24} />
              <span>Device supports Class-C</span>
            </CheckRow>
            <Help $top={10}>
              Select this option when the device will operate as Class-C device immediately after activation. In case it
              sends a DeviceModeInd mac-command when it changes to Class-C, do not select this option.
            </Help>
            <Field>
              <label>Class-C confirmed downlink timeout *</label>
              <div>0</div>
            </Field>
            <Help $top={2}>Class-C timeout (in seconds) for confirmed downlink transmissions.</Help>
            <Actions>UPDATE DEVICE-PROFILE</Actions>
          </Card>
        </Main>
      </Body>

      <Taskbar>
        <Widgets>
          <WeatherIcon />
        </Widgets>
        <WindowsLogo />
        <SearchPill>
          <svg width="16" height="16" viewBox="0 0 16 16" fill="none" stroke="#e6e6e6" strokeWidth="1.800">
            <circle cx="7" cy="7" r="5.700" />
            <path d="M11 11l4.300 4.300" />
          </svg>
          <span>Search web &amp; PC</span>
          <Bison />
        </SearchPill>
        <TaskItems>
          <TaskItem $mark="transparent">
            <TaskView />
          </TaskItem>
          <TaskItem>
            <Folder />
          </TaskItem>
          <TaskItem>
            <Cmd />
          </TaskItem>
          <TaskItem>
            <Keyboard />
          </TaskItem>
          <TaskItem>
            <Unity />
          </TaskItem>
          <TaskItem>
            <UnitySix />
          </TaskItem>
          <TaskItem $mark="#4cc2ff" $markWidth={16}>
            <TaskTile $tone="plain">
              <Chrome />
            </TaskTile>
            <Badge $size={16} $bg="#0288d1" $fg="#fff">
              R
            </Badge>
          </TaskItem>
          <TaskItem>
            <VsCode />
          </TaskItem>
          <TaskItem>
            <Uninstaller />
          </TaskItem>
          <TaskItem>
            <SiWhatsapp size={24} color="#25d366" />
            <Badge $size={18} $bg="#4cc2ff" $fg="#111">
              41
            </Badge>
          </TaskItem>
          <TaskItem $mark="#ff99a4">
            <TaskTile $tone="alert">
              <Arduino />
            </TaskTile>
          </TaskItem>
          <TaskItem>
            <NodesApp />
          </TaskItem>
          <TaskItem>
            <Edge />
          </TaskItem>
          <TaskItem>
            <Putty />
          </TaskItem>
        </TaskItems>
        <Tray>
          <TrayChevron>
            <Line d="M3 10.500l5-5 5 5" w={1.6} />
          </TrayChevron>
          <TrayText $w={34}>
            ENG
            <br />
            INTL
          </TrayText>
          <TrayIcons>
            <svg width="18" height="18" viewBox="0 0 18 18" fill="none" stroke="#fff" strokeWidth="1.200">
              <path d="M8.500 16A7.300 7.300 0 1 1 16 8M8.500 16C4 11 4 6 8.500 1.500c2 2 3 4 3.200 6M1.800 6h13.500M1.800 11h6" />
              <circle cx="13" cy="13" r="4" />
              <path d="M10.300 15.700l5.400-5.400" />
            </svg>
            <svg width="18" height="18" viewBox="0 0 18 18" fill="none" stroke="#fff" strokeWidth="1.200">
              <path d="M1.500 7v4h2.800L8 14V4L4.300 7zM10.500 7a3 3 0 0 1 0 4M12.500 5a5.500 5.500 0 0 1 0 8M14.500 3a8.500 8.500 0 0 1 0 12" />
            </svg>
            <svg width="18" height="18" viewBox="0 0 18 18" fill="none" stroke="#fff" strokeWidth="1.200">
              <path d="M6 5h8a1.500 1.500 0 0 1 1.500 1.500v5A1.500 1.500 0 0 1 14 13H4.500A1.500 1.500 0 0 1 3 11.500V9M16.500 7.500v3" />
              <path d="M7 6.500h7v5H4.500V9z" fill="#fff" stroke="none" />
              <path d="M4 1L1 6h2l-1 4 4-5.500H4z" fill="#fff" stroke="none" />
            </svg>
          </TrayIcons>
          <TrayText $w={64} $align="right">
            4:16:15 PM
            <br />
            7/1/2025
          </TrayText>
        </Tray>
      </Taskbar>
    </Screen>
  );
}
